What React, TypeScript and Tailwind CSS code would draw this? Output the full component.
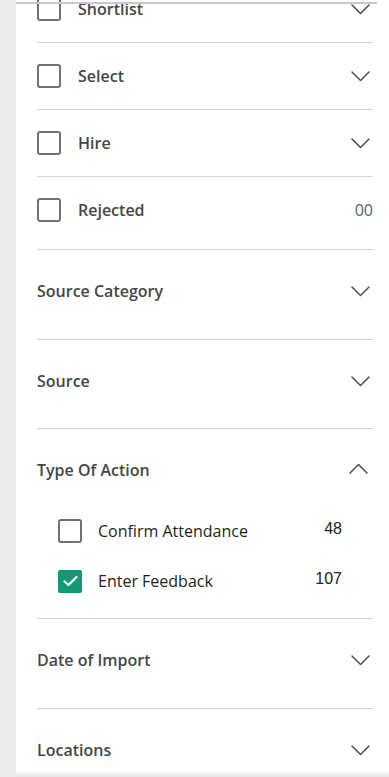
import { useState } from 'react'

type StageRow = { label: string; count?: string }

const stages: StageRow[] = [
  { label: 'Shortlist' },
  { label: 'Select' },
  { label: 'Hire' },
  { label: 'Rejected', count: '00' },
]

const actions = [
  { label: 'Confirm Attendance', count: '48', checked: false },
  { label: 'Enter Feedback', count: '107', checked: true },
]

function Chevron({ up = false }: { up?: boolean }) {
  return (
    <svg width="19" height="11" viewBox="0 0 19 11" fill="none" className="shrink-0">
      <path
        d={up ? 'M1 10 L9.5 1.5 L18 10' : 'M1 1 L9.5 9.5 L18 1'}
        stroke="#4d4d4d"
        strokeWidth="1.5"
        strokeLinecap="round"
        strokeLinejoin="round"
      />
    </svg>
  )
}

function Box({ checked }: { checked: boolean }) {
  if (checked) {
    return (
      <span className="flex h-[23px] w-[24px] shrink-0 items-center justify-center rounded-[2px] bg-[#139a74]">
        <svg width="15" height="12" viewBox="0 0 15 12" fill="none">
          <path d="M1.5 6.5 L5.5 10 L13.5 2" stroke="#fff" strokeWidth="2.2" strokeLinecap="round" strokeLinejoin="round" />
        </svg>
      </span>
    )
  }
  return <span className="h-[24px] w-[24px] shrink-0 rounded-[3px] border-2 border-[#717171] bg-white" />
}

export default function App() {
  const [open] = useState(true)

  return (
    <div
      className="relative flex h-[777px] w-[389px] overflow-hidden bg-[#eaebea]"
      style={{ fontFamily: '"Open Sans", "Noto Sans", sans-serif' }}
    >
      <div className="absolute left-[16px] right-[12px] top-[2px] h-[2px] bg-[#c9c9c9]" />
      <div className="ml-[16px] flex-1 bg-white pl-[21px] pr-[16px]">
        <div className="-mt-[24px]">
          {stages.map((s) => (
            <div
              key={s.label}
              className={`flex items-start border-b border-[#d4d4d4] pt-[21px] ${s.count ? 'h-[73px]' : 'h-[67px]'}`}
            >
              <Box checked={false} />
              <span className="ml-[17px] flex-1 text-[16px] font-semibold leading-[24px] text-[#464646]">{s.label}</span>
              {s.count ? (
                <span className="text-[16px] leading-[24px] text-[#56606a]">{s.count}</span>
              ) : (
                <span className="mr-[3px] mt-[7px]">
                  <Chevron />
                </span>
              )}
            </div>
          ))}

          {['Source Category', 'Source'].map((t, i) => (
            <div
              key={t}
              className={`flex items-start border-b border-[#d4d4d4] pt-[29px] ${i === 0 ? 'h-[90px]' : 'h-[89px]'}`}
            >
              <span className="flex-1 text-[16px] font-semibold leading-[24px] text-[#464646]">{t}</span>
              <span className="mr-[3px] mt-[7px]">
                <Chevron />
              </span>
            </div>
          ))}

          <div className="h-[190px] border-b border-[#d4d4d4] pt-[29px]">
            <div className="flex items-start">
              <span className="flex-1 text-[16px] font-semibold leading-[24px] text-[#464646]">Type Of Action</span>
              <span className="mr-[5px] mt-[5px]">
                <Chevron up={open} />
              </span>
            </div>
            <div className="mt-[37px] flex flex-col gap-[26px] pl-[21px] pr-[31px]">
              {actions.map((a) => (
                <div key={a.label} className="flex h-[24px] items-center">
                  <Box checked={a.checked} />
                  <span className="ml-[16px] flex-1 text-[16px] leading-[24px] text-[#1e1e1e]">{a.label}</span>
                  <span
                    className="-mt-[4px] text-[16px] leading-[24px] text-[#222]"
                    style={{ fontFamily: '"Liberation Sans", Arial, sans-serif' }}
                  >
                    {a.count}
                  </span>
                </div>
              ))}
            </div>
          </div>

          {['Date of Import', 'Locations'].map((t) => (
            <div key={t} className="flex h-[90px] items-start border-b border-[#d4d4d4] pt-[29px]">
              <span className="flex-1 text-[16px] font-semibold leading-[24px] text-[#464646]">{t}</span>
              <span className="mr-[3px] mt-[7px]">
                <Chevron />
              </span>
            </div>
          ))}
        </div>
      </div>
      <div className="absolute bottom-0 left-[16px] right-0 h-[6px] bg-gradient-to-b from-transparent to-[#e4e4e4]" />
    </div>
  )
}
